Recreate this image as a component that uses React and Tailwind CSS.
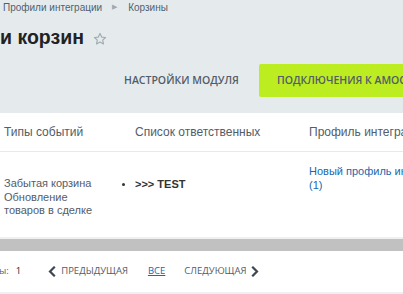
import React from 'react';

const Star = () => (
  <svg width="14" height="14" viewBox="0 0 24 24" fill="none" stroke="#a3abb2" strokeWidth="2" strokeLinejoin="round">
    <path d="M12 2.5l2.9 6.2 6.6.7-4.9 4.5 1.4 6.6L12 17.1l-6 3.4 1.4-6.6-4.9-4.5 6.6-.7z" />
  </svg>
);

const Chevron = ({ left }) => (
  <svg width="8" height="11" viewBox="0 0 8 11" fill="none" stroke="#3f4852" strokeWidth="2.2" strokeLinecap="square">
    {left ? <path d="M6 1.5L2 5.5l4 4" /> : <path d="M2 1.5l4 4-4 4" />}
  </svg>
);

export default function App() {
  return (
    <div className="w-[403px] h-[294px] overflow-hidden bg-[#e5ebed] font-['Liberation_Sans',Arial,sans-serif] text-[#535c69]">
      {/* breadcrumbs */}
      <div className="flex items-center h-[15px] pl-[3px] text-[10px] text-[#525f6e] whitespace-nowrap">
        <span>Профили интеграции</span>
        <span className="ml-[10px] text-[7px] text-[#a0a8b0]">▶</span>
        <span className="ml-[11px]">Корзины</span>
      </div>

      {/* title */}
      <div className="flex items-center h-[46px] pb-[1px] whitespace-nowrap">
        <h1 className="text-[19.5px] font-bold text-[#222] leading-none">и корзин</h1>
        <span className="ml-[9px] mt-[3px]"><Star /></span>
      </div>

      {/* buttons */}
      <div className="flex items-start h-[52px] pt-[3px] font-['Open_Sans',sans-serif] text-[10.5px] font-semibold whitespace-nowrap">
        <span className="ml-[124px] h-[33px] flex items-center text-[#535c69]">НАСТРОЙКИ МОДУЛЯ</span>
        <div className="ml-[20px] h-[33px] flex items-center pl-[18px] pr-[20px] bg-[#bbed21] rounded-[2px] text-[#535c69]">
          ПОДКЛЮЧЕНИЯ К AMOCRM
        </div>
      </div>

      {/* table */}
      <div className="bg-white">
        <div className="flex items-center h-[39px] border-b border-[#e7eaec] text-[12px] text-[#535c69] whitespace-nowrap">
          <div className="w-[135px] shrink-0 pl-[4px]">Типы событий</div>
          <div className="w-[174px] shrink-0">Список ответственных</div>
          <div className="shrink-0">Профиль интеграции</div>
        </div>
        <div className="flex h-[85px] pt-[12px] text-[11px]">
          <div className="w-[118px] shrink-0 pl-[4px] pt-[13px] leading-[13.5px] text-[#535c69]">
            <div className="w-[96px]">Забытая корзина<br />Обновление товаров в сделке</div>
          </div>
          <div className="w-[191px] shrink-0 pt-[13px] flex items-start whitespace-nowrap leading-[14px]">
            <span className="ml-[4px] mt-[6px] w-[3px] h-[3px] rounded-full bg-[#333]" />
            <span className="ml-[10px] font-bold text-[#333]">&gt;&gt;&gt; TEST</span>
          </div>
          <div className="w-[145px] shrink-0 leading-[14px] text-[#2067b0]">Новый профиль интеграции (1)</div>
        </div>
        <div className="h-[2px] bg-[#f0f0f0]" />
        <div className="h-[12px] bg-[#c1c1c1]" />

        {/* pagination */}
        <div className="flex items-center h-[41px] font-['Open_Sans',sans-serif] text-[9.5px] text-[#535c69] whitespace-nowrap">
          <span className="ml-[-1px]">ы:</span>
          <span className="ml-[7px] text-[#1e2a3a]">1</span>
          <span className="ml-[27px] flex items-center"><Chevron left /></span>
          <span className="ml-[5px]">ПРЕДЫДУЩАЯ</span>
          <span className="ml-[20px] text-[#2067b0] underline">ВСЕ</span>
          <span className="ml-[19px]">СЛЕДУЮЩАЯ</span>
          <span className="ml-[5px] flex items-center"><Chevron /></span>
        </div>
        <div className="h-[4px] bg-[#eef1f3]" />
      </div>
    </div>
  );
}
